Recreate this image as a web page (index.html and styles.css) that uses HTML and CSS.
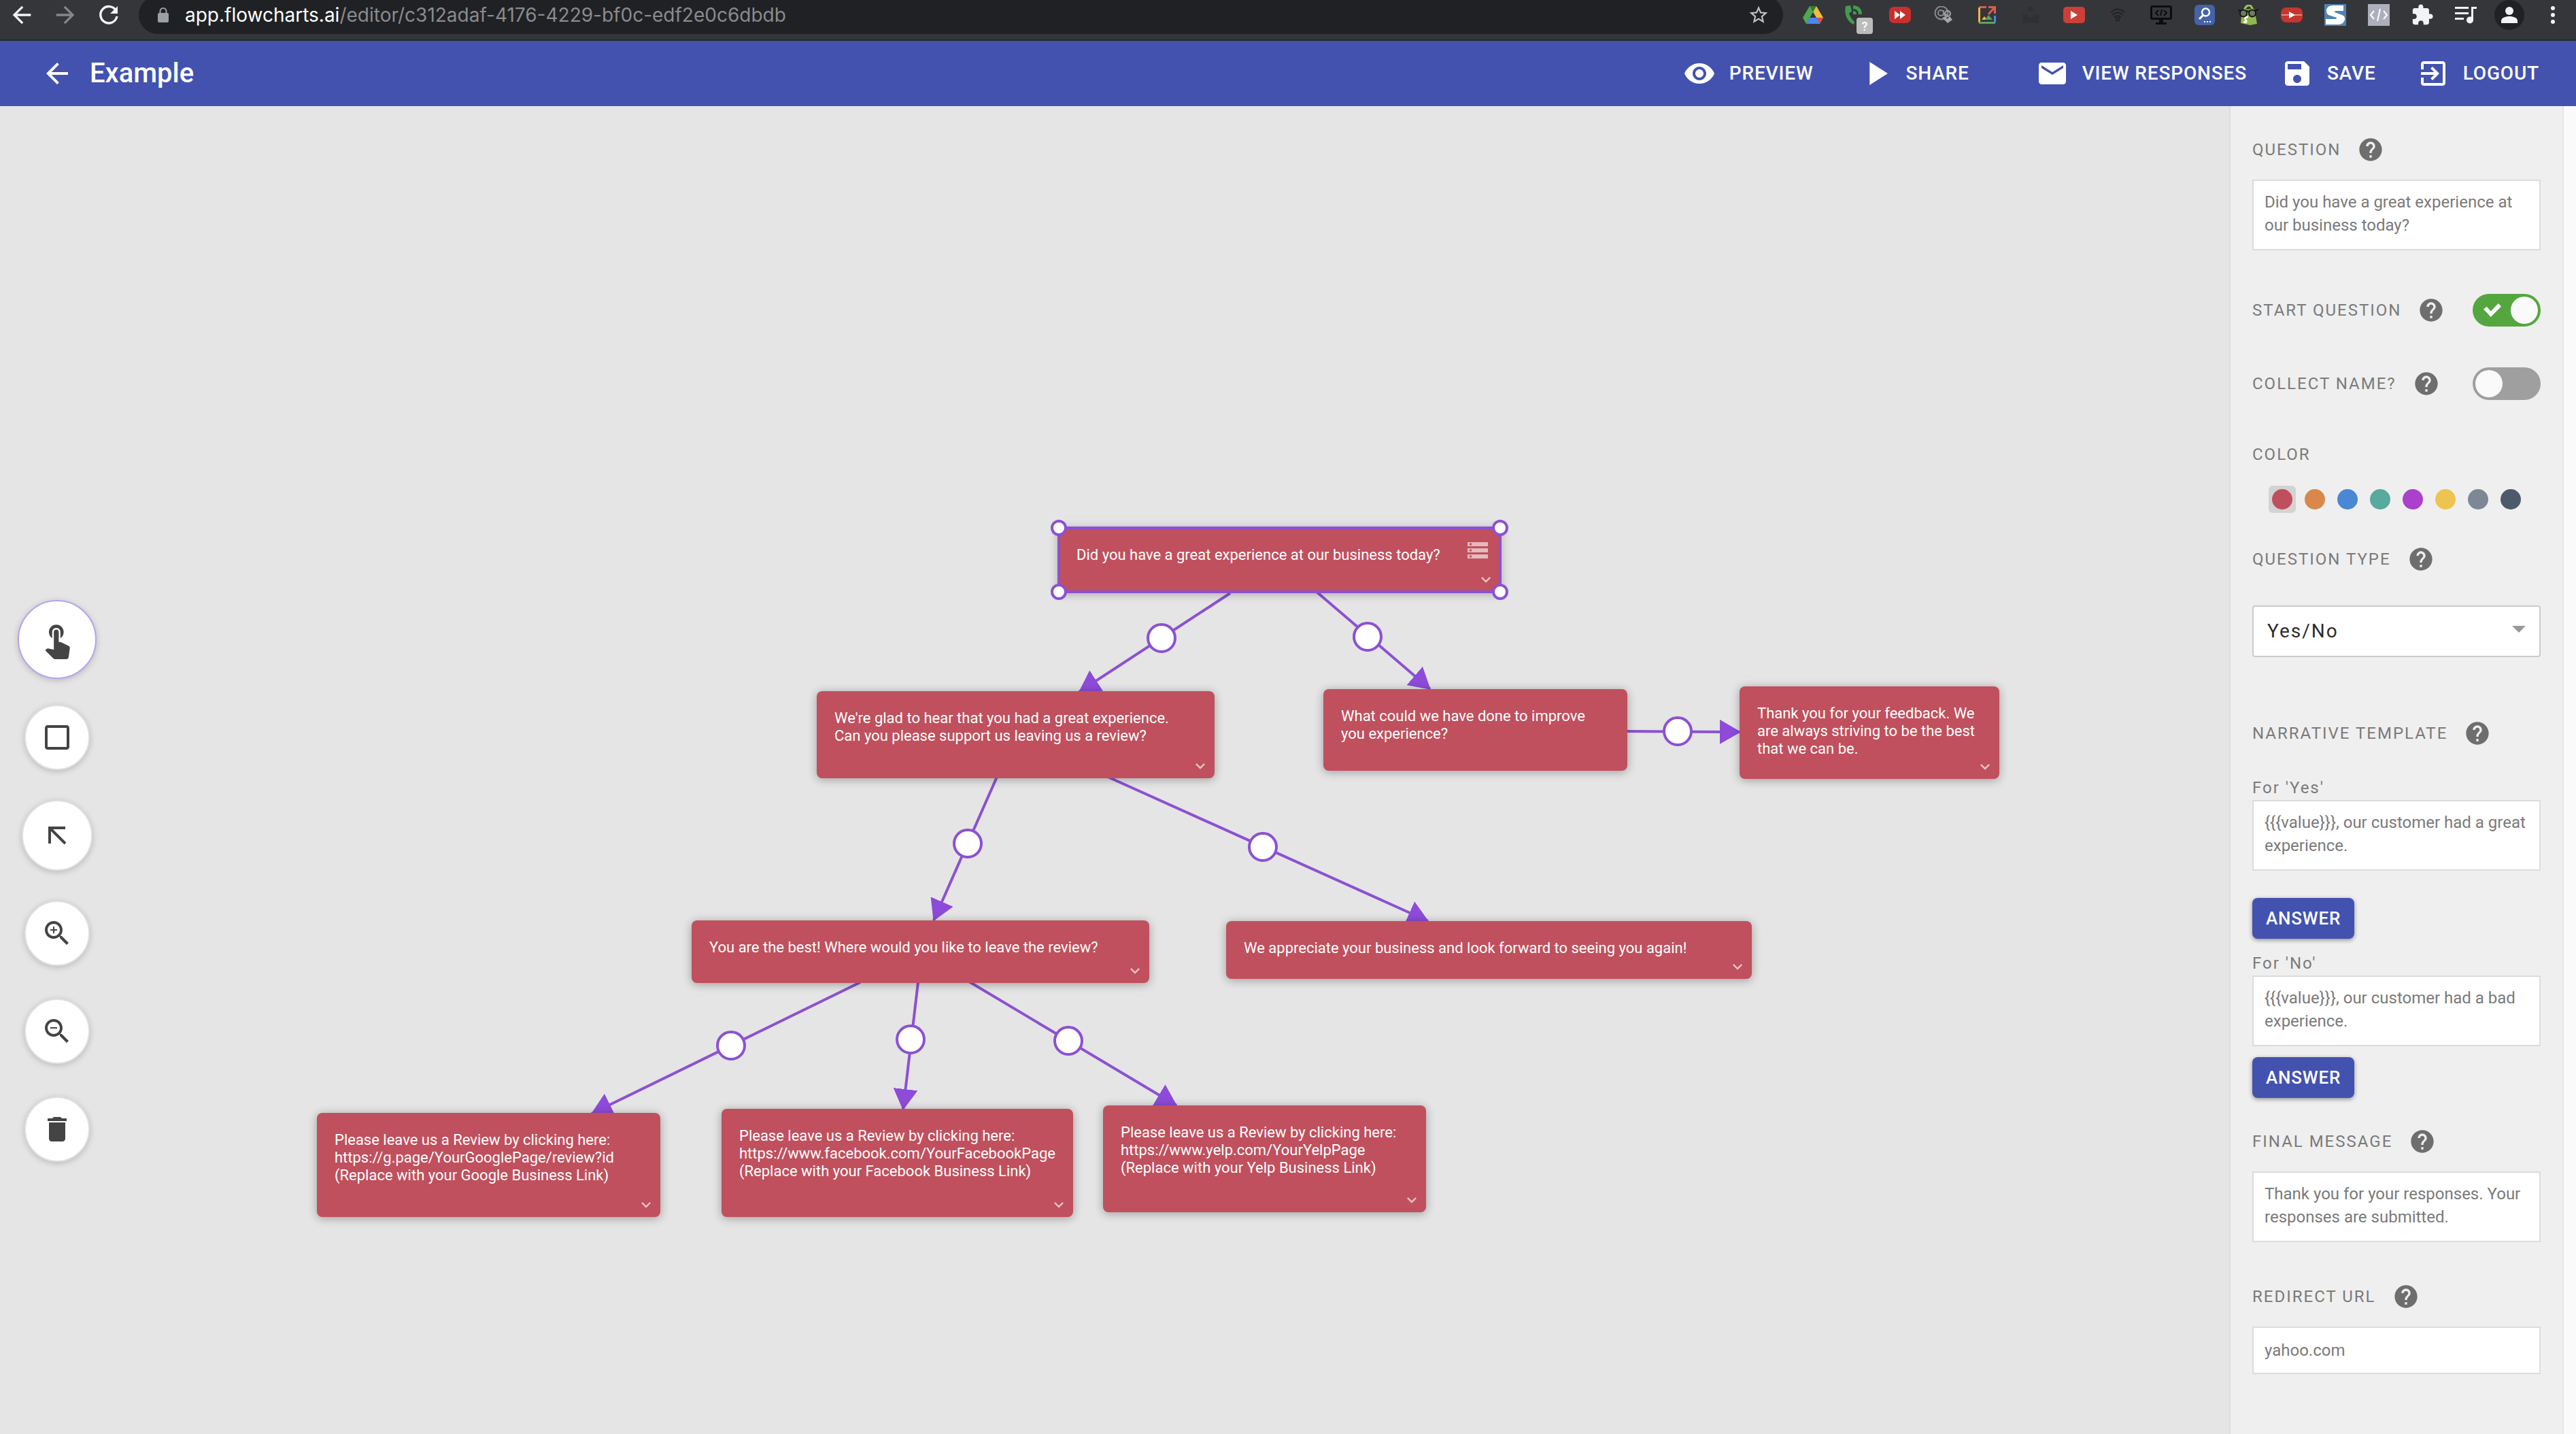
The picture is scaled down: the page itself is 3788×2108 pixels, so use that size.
FILE: index.html
```html
<!DOCTYPE html>
<html lang="en">
<head>
<meta charset="utf-8">
<meta name="viewport" content="width=device-width, initial-scale=1">
<title>Example – Flowchart editor</title>
<link rel="stylesheet" href="styles.css">
</head>
<body>
<svg class="defs" aria-hidden="true">
  <symbol id="help" viewBox="0 0 24 24"><path d="M12 2C6.48 2 2 6.48 2 12s4.48 10 10 10 10-4.48 10-10S17.52 2 12 2zm1 17h-2v-2h2v2zm2.07-7.75l-.9.92C13.45 12.9 13 13.5 13 15h-2v-.5c0-1.1.45-2.1 1.17-2.83l1.24-1.26c.37-.36.59-.86.59-1.41 0-1.1-.9-2-2-2s-2 .9-2 2H8c0-2.21 1.79-4 4-4s4 1.79 4 4c0 .88-.36 1.68-.93 2.25z"/></symbol>
  <symbol id="chevron" viewBox="0 0 24 24"><path d="M16.59 8.59L12 13.17 7.41 8.59 6 10l6 6 6-6z"/></symbol>
  <symbol id="back" viewBox="0 0 24 24"><path d="M20 11H7.83l5.59-5.59L12 4l-8 8 8 8 1.41-1.41L7.83 13H20v-2z"/></symbol>
</svg>

<div class="browser">
  <div class="browser-nav">
    <button class="nav-btn" aria-label="Back"><svg width="40" height="40"><use href="#back"/></svg></button>
    <button class="nav-btn nav-btn--off nav-btn--flip" aria-label="Forward"><svg width="40" height="40"><use href="#back"/></svg></button>
    <button class="nav-btn" aria-label="Reload"><svg width="40" height="40" viewBox="0 0 40 40"><path d="M30.5 13.5A12.2 12.2 0 1 0 32 22" fill="none" stroke="currentColor" stroke-width="3.4"/><path d="M33 7v11H22z"/></svg></button>
  </div>
  <div class="omnibox">
    <svg class="lock" width="16" height="22" viewBox="0 0 16 22"><path d="M3.5 9V5.500a4.500 4.500 0 0 1 9 0V9" fill="none" stroke="currentColor" stroke-width="2"/><rect y="8" width="16" height="14" rx="2"/></svg>
    <span class="url"><b>app.flowcharts.ai</b>/editor/c312adaf-4176-4229-bf0c-edf2e0c6dbdb</span>
    <button class="star" aria-label="Bookmark"><svg width="32" height="32" viewBox="0 0 24 24"><path d="M22 9.24l-7.190-.62L12 2 9.190 8.630 2 9.240l5.460 4.730L5.820 21 12 17.270 18.180 21l-1.630-7.030L22 9.240zM12 15.400l-3.760 2.270 1-4.280-3.320-2.880 4.380-.38L12 6.100l1.710 4.040 4.380.38-3.320 2.880 1 4.280L12 15.400z"/></svg></button>
  </div>
  <div class="extensions">
    <button class="ext" aria-label="Drive"><svg width="32" height="28" viewBox="0 0 32 28"><path d="M11 1h10l10 17H21z" fill="#f2bb42"/><path d="M11 1h10l-5 9z" fill="#2f7d32"/><path d="M11 1l5 9L6 27 1 18z" fill="#4fa94f"/><path d="M6 27l5-9h20l-5 9z" fill="#4b87ee"/><path d="M31 18l-5 9-5-9z" fill="#d9503f"/></svg></button>
    <button class="ext" aria-label="Calls"><svg class="tall" width="46" height="44" viewBox="0 0 46 44"><path d="M7 9l7-1 2 8-4 4c2 5 4 8 8 12l-1 4C11 33 4 22 7 9zM18 8c8 0 13 5 13 13h-5c0-5-3-8-8-8z" fill="#439c4c"/><path d="M18 16c3 0 5 2 5 5h-5z" fill="#439c4c"/><rect x="23" y="26" width="24" height="24" rx="4" fill="#bcbcbc"/><text x="35" y="45" text-anchor="middle" class="badge-text">?</text></svg></button>
    <button class="ext" aria-label="Fast forward"><svg width="32" height="24" viewBox="0 0 32 24"><rect width="32" height="24" rx="7" fill="#c82f2d"/><path d="M8 6l8 6-8 6zM16 6l8 6-8 6z" fill="#fff"/></svg></button>
    <button class="ext" aria-label="Mail finder"><svg width="28" height="26" viewBox="0 0 28 26"><circle cx="11" cy="10" r="9.500" fill="none" stroke="#8a8b8d" stroke-width="2"/><circle cx="10" cy="10" r="4" fill="none" stroke="#8a8b8d" stroke-width="2"/><path d="M14 6v7q3 2 5-2" fill="none" stroke="#8a8b8d" stroke-width="2"/><circle cx="20" cy="11" r="4" fill="none" stroke="#a6a7a9" stroke-width="2"/><path d="M12 17l5-2 2 4 4-4 4 5-7 5z" fill="#a6a7a9"/></svg></button>
    <button class="ext" aria-label="Image opener"><svg width="26" height="26" viewBox="0 0 26 26"><g fill="none" stroke-width="3"><path d="M12 1.500H1.500" stroke="#d4604f"/><path d="M1.500 2v22" stroke="#e9b941"/><path d="M1 24.500h24" stroke="#57a55a"/><path d="M24.500 14v10" stroke="#4f86e4"/><path d="M15 12l9-10M15 1.500h9.500V11" stroke="#d4604f"/></g><path d="M5 20l4-5 4 5z" fill="#e9b941"/><path d="M10 20l5-7 6 7z" fill="#57a55a"/></svg></button>
    <button class="ext" aria-label="Extension"><svg width="24" height="24" viewBox="0 0 24 24"><path d="M0 11h8v4h8v-4h8v13H0zM8 0h8v7H8z" fill="#2f3033"/></svg></button>
    <button class="ext" aria-label="Video"><svg width="32" height="24" viewBox="0 0 32 24"><rect width="32" height="24" rx="5" fill="#cb4038"/><path d="M11 6l10 6-10 6z" fill="#fff"/></svg></button>
    <button class="ext" aria-label="Signal"><svg width="22" height="20" viewBox="0 0 22 20"><g fill="none" stroke="#222326" stroke-width="2"><path d="M1 6q10-9 20 0M3 10q8-7 16 0M6 13q5-4 10 0"/><circle cx="11" cy="16" r="2.500"/></g></svg></button>
    <button class="ext" aria-label="Web console"><svg width="32" height="28" viewBox="0 0 32 28"><rect x="1.500" y="1.500" width="29" height="18" rx="2" fill="none" stroke="#0c0c0d" stroke-width="3"/><path d="M13 20h6v5h5v3H8v-3h5z" fill="#0c0c0d"/><path d="M12 7l-4 4 4 4M20 7l4 4-4 4M17 6l-2 9" fill="none" stroke="#0c0c0d" stroke-width="2"/></svg></button>
    <button class="ext" aria-label="Search tool"><svg width="30" height="30" viewBox="0 0 30 30"><rect width="30" height="30" rx="6" fill="#4663a8"/><circle cx="16.500" cy="11" r="5.500" fill="none" stroke="#fff" stroke-width="2.500"/><path d="M13 15l-6 6" stroke="#fff" stroke-width="3"/><path d="M14 25h2M18 25h2M22 25h2" stroke="#fff" stroke-width="2"/></svg></button>
    <button class="ext" aria-label="Store inspector"><svg width="32" height="30" viewBox="0 0 32 30"><path d="M7 7l18-1 4 22-10 2-14-3z" fill="#8fb84e"/><path d="M10 8q3-8 8-7 4 1 4 7" fill="none" stroke="#9bc25a" stroke-width="3"/><path d="M1 8l5 1h8l2 1 2-1h7l6-2" fill="none" stroke="#141414" stroke-width="2"/><circle cx="9" cy="12.500" r="5" fill="#6f7b62" stroke="#141414" stroke-width="2"/><circle cx="22" cy="12.500" r="5" fill="#6f7b62" stroke="#141414" stroke-width="2"/><path d="M16 18q-6 0-4 4 3 3 0 4l-3-1" fill="none" stroke="#fff" stroke-width="2.500"/></svg></button>
    <button class="ext" aria-label="Player"><svg width="32" height="24" viewBox="0 0 32 24"><rect y="1" width="32" height="22" rx="8" fill="#c4362f"/><path d="M1 12h30" stroke="#e58b84" stroke-width="2"/><path d="M12 7l9 5-9 5z" fill="#fff"/></svg></button>
    <button class="ext" aria-label="Stylebot"><svg width="32" height="32" viewBox="0 0 32 32"><rect width="32" height="32" fill="#4f83b3"/><path d="M28 2v8H18q-4 0-3 2l11 4q5 2 4 7-2 7-9 7H2v-8h13q4 0 3-2L6 16q-4-3-3-8 2-6 9-6z" fill="#fff"/></svg></button>
    <button class="ext" aria-label="Code"><svg width="32" height="32" viewBox="0 0 32 32"><rect width="32" height="32" fill="#adafbd"/><path d="M9 10l-5 6 5 6M23 10l5 6-5 6M18 7l-4 18" fill="none" stroke="#fff" stroke-width="2"/></svg></button>
    <button class="ext" aria-label="Extensions"><svg width="34" height="34" viewBox="0 0 24 24"><path d="M20.500 11H19V7c0-1.100-.9-2-2-2h-4V3.500C13 2.120 11.880 1 10.500 1S8 2.120 8 3.500V5H4c-1.100 0-1.990.9-1.990 2v3.800H3.500c1.490 0 2.700 1.210 2.700 2.700s-1.210 2.700-2.700 2.700H2V20c0 1.100.9 2 2 2h3.800v-1.500c0-1.490 1.210-2.700 2.700-2.700 1.490 0 2.700 1.210 2.700 2.700V22H17c1.100 0 2-.9 2-2v-4h1.500c1.380 0 2.500-1.120 2.500-2.500S21.880 11 20.500 11z"/></svg></button>
    <button class="ext" aria-label="Media"><svg width="32" height="26" viewBox="0 0 32 26"><path d="M0 1h20v3H0zM0 9h20v3H0zM0 17h13v3H0z"/><path d="M24 1h8v3h-5v16h-3z"/><circle cx="22" cy="20.500" r="5"/></svg></button>
    <button class="ext" aria-label="Profile"><svg width="44" height="44" viewBox="0 0 44 44"><circle cx="22" cy="22" r="22" fill="#202124"/><circle cx="22" cy="16" r="6"/><path d="M10 34v-3c0-5 6-7 12-7s12 2 12 7v3z"/></svg></button>
    <button class="ext" aria-label="Menu"><svg width="6" height="26" viewBox="0 0 6 26"><circle cx="3" cy="3" r="3"/><circle cx="3" cy="13" r="3"/><circle cx="3" cy="23" r="3"/></svg></button>
  </div>
</div>

<header class="appbar">
  <a class="appbar-back" href="#" aria-label="Back to list"><svg width="48" height="48"><use href="#back"/></svg></a>
  <h1 class="appbar-title">Example</h1>
  <nav class="actions">
    <button class="action"><svg width="48" height="48" viewBox="0 0 24 24"><path d="M12 4.500C7 4.500 2.730 7.610 1 12c1.730 4.390 6 7.500 11 7.500s9.270-3.110 11-7.500c-1.730-4.390-6-7.500-11-7.500zM12 17c-2.760 0-5-2.240-5-5s2.240-5 5-5 5 2.240 5 5-2.240 5-5 5zm0-8c-1.660 0-3 1.340-3 3s1.340 3 3 3 3-1.340 3-3-1.340-3-3-3z"/></svg>PREVIEW</button>
    <button class="action action--share"><svg width="58" height="58" viewBox="0 0 24 24"><path d="M8 5v14l11-7z"/></svg>SHARE</button>
    <button class="action action--responses"><svg width="48" height="48" viewBox="0 0 24 24"><path d="M20 4H4c-1.100 0-1.990.9-1.990 2L2 18c0 1.100.9 2 2 2h16c1.100 0 2-.9 2-2V6c0-1.100-.9-2-2-2zm0 4l-8 5-8-5V6l8 5 8-5v2z"/></svg>VIEW RESPONSES</button>
    <button class="action action--save"><svg width="48" height="48" viewBox="0 0 24 24"><path d="M17 3H5c-1.110 0-2 .9-2 2v14c0 1.100.89 2 2 2h14c1.100 0 2-.9 2-2V7l-4-4zm-5 16c-1.660 0-3-1.340-3-3s1.340-3 3-3 3 1.340 3 3-1.340 3-3 3zm3-10H5V5h10v4z"/></svg>SAVE</button>
    <button class="action"><svg width="48" height="48" viewBox="0 0 24 24"><path d="M10.090 15.590L11.500 17l5-5-5-5-1.410 1.410L12.670 11H3v2h9.670l-2.580 2.590zM19 3H5c-1.110 0-2 .9-2 2v4h2V5h14v14H5v-4H3v4c0 1.100.89 2 2 2h14c1.100 0 2-.9 2-2V5c0-1.100-.9-2-2-2z"/></svg>LOGOUT</button>
  </nav>
</header>

<div class="workspace">
  <main class="canvas">
    <svg class="edges" aria-hidden="true">
      <defs><marker id="arrow" markerUnits="userSpaceOnUse" markerWidth="32" markerHeight="36" refX="30" refY="18" orient="auto"><path d="M0 0L31 18L0 36z" fill="#8e4bd9"/></marker></defs>
      <g class="edge-lines">
        <path d="M1809 716L1587 861"/>
        <path d="M1936 714L2103 857"/>
        <path d="M2390 919L2559 920"/>
        <path d="M1466 986L1373 1197"/>
        <path d="M1629 986L2100 1198"/>
        <path d="M1265 1288L870 1481"/>
        <path d="M1350 1288L1328 1475"/>
        <path d="M1425 1287L1730 1469"/>
      </g>
      <g class="edge-dots">
        <circle cx="1708" cy="782" r="20"/>
        <circle cx="2011" cy="780" r="20"/>
        <circle cx="2467" cy="919" r="20"/>
        <circle cx="1423" cy="1084" r="20"/>
        <circle cx="1857" cy="1089" r="20"/>
        <circle cx="1075" cy="1381" r="20"/>
        <circle cx="1339" cy="1372" r="20"/>
        <circle cx="1571" cy="1374" r="20"/>
      </g>
    </svg>

    <article class="node node--start">Did you have a great experience at our business today?
      <svg class="node-list" width="36" height="36" viewBox="0 0 24 24"><path d="M2 20h20v-4H2v4zm2-3h2v2H4v-2zM2 4v4h20V4H2zm4 3H4V5h2v2zm-4 7h20v-4H2v4zm2-3h2v2H4v-2z"/></svg>
      <svg class="node-more"><use href="#chevron"/></svg>
      <i class="handle handle--tl"></i><i class="handle handle--tr"></i><i class="handle handle--bl"></i><i class="handle handle--br"></i>
    </article>
    <article class="node node--glad">We're glad to hear that you had a great experience.<br>Can you please support us leaving us a review?<svg class="node-more"><use href="#chevron"/></svg></article>
    <article class="node node--improve">What could we have done to improve<br>you experience?</article>
    <article class="node node--thanks">Thank you for your feedback. We<br>are always striving to be the best<br>that we can be.<svg class="node-more"><use href="#chevron"/></svg></article>
    <article class="node node--best">You are the best! Where would you like to leave the review?<svg class="node-more"><use href="#chevron"/></svg></article>
    <article class="node node--again">We appreciate your business and look forward to seeing you again!<svg class="node-more"><use href="#chevron"/></svg></article>
    <article class="node node--google">Please leave us a Review by clicking here:<br>https://g.page/YourGooglePage/review?id<br>(Replace with your Google Business Link)<svg class="node-more"><use href="#chevron"/></svg></article>
    <article class="node node--facebook">Please leave us a Review by clicking here:<br>https://www.facebook.com/YourFacebookPage<br>(Replace with your Facebook Business Link)<svg class="node-more"><use href="#chevron"/></svg></article>
    <article class="node node--yelp">Please leave us a Review by clicking here:<br>https://www.yelp.com/YourYelpPage<br>(Replace with your Yelp Business Link)<svg class="node-more"><use href="#chevron"/></svg></article>

    <div class="tools">
      <div class="tool-slot"><button class="tool tool--active" aria-label="Select"><svg width="58" height="58" viewBox="0 0 24 24"><path d="M9 11.240V7.500C9 6.120 10.120 5 11.500 5S14 6.120 14 7.500v3.740c1.210-.81 2-2.180 2-3.740C16 5.010 13.990 3 11.500 3S7 5.010 7 7.500c0 1.560.79 2.930 2 3.740zm9.840 4.630l-4.540-2.260c-.17-.07-.35-.11-.54-.11H13v-6c0-.83-.67-1.500-1.500-1.500S10 6.670 10 7.500v10.740l-3.430-.72c-.08-.01-.15-.03-.24-.03-.31 0-.59.13-.79.33l-.79.8 4.940 4.940c.27.27.65.44 1.060.44h6.790c.75 0 1.330-.55 1.440-1.280l.75-5.270c.01-.07.02-.14.02-.2 0-.62-.38-1.160-.91-1.380z"/></svg></button></div>
      <div class="tool-slot"><button class="tool" aria-label="Add box"><svg width="48" height="48" viewBox="0 0 24 24"><path d="M19 3H5c-1.100 0-2 .9-2 2v14c0 1.100.9 2 2 2h14c1.100 0 2-.9 2-2V5c0-1.100-.9-2-2-2zm0 16H5V5h14v14z"/></svg></button></div>
      <div class="tool-slot"><button class="tool tool--arrow" aria-label="Add arrow"><svg width="28" height="28" viewBox="0 0 28 28"><path d="M3 26V3H26M3 3L26 26" fill="none" stroke="currentColor" stroke-width="4"/></svg></button></div>
      <div class="tool-slot"><button class="tool" aria-label="Zoom in"><svg width="48" height="48" viewBox="0 0 24 24"><path d="M15.500 14h-.79l-.28-.27C15.410 12.590 16 11.110 16 9.500 16 5.910 13.090 3 9.500 3S3 5.910 3 9.500 5.910 16 9.500 16c1.610 0 3.090-.59 4.230-1.570l.27.28v.79l5 4.990L20.490 19l-4.990-5zm-6 0C7.010 14 5 11.990 5 9.500S7.010 5 9.500 5 14 7.010 14 9.500 11.990 14 9.500 14zm2.500-4h-2v2H9v-2H7V9h2V7h1v2h2v1z"/></svg></button></div>
      <div class="tool-slot"><button class="tool" aria-label="Zoom out"><svg width="48" height="48" viewBox="0 0 24 24"><path d="M15.500 14h-.79l-.28-.27C15.410 12.590 16 11.110 16 9.500 16 5.910 13.090 3 9.500 3S3 5.910 3 9.500 5.910 16 9.500 16c1.610 0 3.090-.59 4.230-1.570l.27.28v.79l5 4.990L20.490 19l-4.990-5zm-6 0C7.010 14 5 11.990 5 9.500S7.010 5 9.500 5 14 7.010 14 9.500 11.990 14 9.500 14zM7 9h5v1H7z"/></svg></button></div>
      <div class="tool-slot"><button class="tool" aria-label="Delete"><svg width="48" height="48" viewBox="0 0 24 24"><path d="M6 19c0 1.100.9 2 2 2h8c1.100 0 2-.9 2-2V7H6v12zM19 4h-3.500l-1-1h-5l-1 1H5v2h14V4z"/></svg></button></div>
    </div>
  </main>

  <aside class="panel">
    <section class="field">
      <div class="row"><label class="label" for="question">QUESTION</label><button class="help" aria-label="Help: question"><svg><use href="#help"/></svg></button></div>
      <textarea class="box" id="question">Did you have a great experience at our business today?</textarea>
    </section>
    <section class="toggles">
      <div class="row row--toggle"><label class="label" for="start">START QUESTION</label><button class="help" aria-label="Help: start question"><svg><use href="#help"/></svg></button><input class="switch" type="checkbox" id="start" checked></div>
      <div class="row row--toggle"><label class="label" for="collect">COLLECT NAME?</label><button class="help" aria-label="Help: collect name"><svg><use href="#help"/></svg></button><input class="switch" type="checkbox" id="collect"></div>
    </section>
    <section class="colors">
      <span class="label">COLOR</span>
      <div class="palette">
        <button class="swatch swatch--on swatch--red" aria-label="Red"></button>
        <button class="swatch swatch--orange" aria-label="Orange"></button>
        <button class="swatch swatch--blue" aria-label="Blue"></button>
        <button class="swatch swatch--teal" aria-label="Teal"></button>
        <button class="swatch swatch--purple" aria-label="Purple"></button>
        <button class="swatch swatch--yellow" aria-label="Yellow"></button>
        <button class="swatch swatch--gray" aria-label="Gray"></button>
        <button class="swatch swatch--slate" aria-label="Slate"></button>
      </div>
    </section>
    <section class="type">
      <div class="row"><label class="label" for="type">QUESTION TYPE</label><button class="help" aria-label="Help: question type"><svg><use href="#help"/></svg></button></div>
      <div class="select-wrap"><select class="select" id="type"><option>Yes/No</option></select></div>
    </section>
    <section class="narrative">
      <div class="row"><span class="label">NARRATIVE TEMPLATE</span><button class="help" aria-label="Help: narrative template"><svg><use href="#help"/></svg></button></div>
      <div class="template">
        <label class="label" for="yes">For 'Yes'</label>
        <textarea class="box" id="yes">{{{value}}}, our customer had a great experience.</textarea>
        <button class="answer answer--yes">ANSWER</button>
      </div>
      <div class="template">
        <label class="label" for="no">For 'No'</label>
        <textarea class="box" id="no">{{{value}}}, our customer had a bad experience.</textarea>
        <button class="answer">ANSWER</button>
      </div>
    </section>
    <section class="field">
      <div class="row"><label class="label" for="final">FINAL MESSAGE</label><button class="help" aria-label="Help: final message"><svg><use href="#help"/></svg></button></div>
      <textarea class="box" id="final">Thank you for your responses. Your responses are submitted.</textarea>
    </section>
    <section class="field">
      <div class="row"><label class="label" for="redirect">REDIRECT URL</label><button class="help" aria-label="Help: redirect url"><svg><use href="#help"/></svg></button></div>
      <input class="box box--line" type="text" id="redirect" value="yahoo.com">
    </section>
  </aside>
</div>
</body>
</html>
```
FILE: styles.css
```css
* { box-sizing: border-box; }

body {
  margin: 0;
  min-height: 100vh;
  display: flex;
  flex-direction: column;
  overflow-x: hidden;
  background: #fafafa;
  font-family: Roboto, "Liberation Sans", sans-serif;
}

button {
  margin: 0;
  padding: 0;
  border: 0;
  background: none;
  color: inherit;
  font: inherit;
  display: flex;
  align-items: center;
  justify-content: center;
}

svg { display: block; fill: currentColor; flex: none; }
.defs { position: absolute; width: 0; height: 0; }

/* Browser bar */
.browser {
  height: 60px;
  display: flex;
  align-items: flex-start;
  padding-right: 2px;
  overflow: hidden;
  background: #35363a;
  border-bottom: 2px solid #27282b;
  color: #f1f3f4;
}
.browser-nav { display: flex; width: 204px; height: 44px; }
.nav-btn { width: 64px; height: 44px; }
.nav-btn--off { color: #85868a; }
.nav-btn--flip svg { transform: scaleX(-1); }
.omnibox {
  flex: 1;
  height: 56px;
  margin: -6px 12px 0 0;
  padding: 0 20px 0 28px;
  display: flex;
  align-items: center;
  gap: 24px;
  border-radius: 28px;
  background: #202124;
  color: #9aa0a6;
}
.url {
  flex: 1;
  font: 28px/32px Inter, Roboto, sans-serif;
  color: #8a8b8e;
}
.url b { font-weight: 400; color: #fff; }
.star { color: #c0c2c5; }
.extensions { display: flex; }
.ext { width: 64px; height: 44px; }
.ext .tall { overflow: visible; }
.badge-text { font: 500 18px Roboto, sans-serif; fill: #fff; }

/* App bar */
.appbar {
  height: 96px;
  display: flex;
  align-items: center;
  padding: 0 54px 0 60px;
  background: #4352af;
  color: #fff;
}
.appbar-back { color: inherit; }
.appbar-title {
  margin: 0 auto 0 24px;
  font-size: 40px;
  line-height: 48px;
  font-weight: 500;
}
.actions { display: flex; }
.action {
  gap: 20px;
  margin-left: 60px;
  font-size: 28px;
  line-height: 48px;
  font-weight: 500;
  letter-spacing: 0.03em;
}
.action--share { gap: 14px; margin-left: 64px; }
.action--responses { margin-left: 98px; }
.action--save { margin-left: 50px; }

/* Workspace */
.workspace { flex: 1; display: flex; }
.canvas {
  flex: 1;
  position: relative;
  overflow: hidden;
  background: #e5e5e5;
}
.edges { position: absolute; inset: 0; width: 100%; height: 100%; }
.edge-lines { fill: none; stroke: #8b51d2; stroke-width: 4; }
.edge-lines path { marker-end: url(#arrow); }
.edge-dots { fill: #fff; stroke: #8b51d2; stroke-width: 4; }

.node {
  position: absolute;
  padding: 27px 26px;
  border-radius: 8px;
  background: #c0505d;
  box-shadow: 0 2px 14px rgba(0, 0, 0, 0.32);
  color: #fff;
  font-size: 22px;
  line-height: 26px;
  white-space: nowrap;
}
.node-more {
  position: absolute;
  right: 7px;
  bottom: 4px;
  width: 28px;
  height: 28px;
  opacity: 0.65;
}
.node-list { position: absolute; right: 15px; top: 15px; opacity: 0.6; }
.node--start {
  left: 1557px; top: 620px; width: 649px; height: 94px;
  outline: 4px solid #8b51d2;
  outline-offset: -2px;
  border-radius: 0;
}
.node--glad { left: 1201px; top: 860px; width: 585px; height: 128px; }
.node--improve { left: 1946px; top: 857px; width: 447px; height: 120px; }
.node--thanks { left: 2558px; top: 853px; width: 382px; height: 136px; }
.node--best { left: 1017px; top: 1197px; width: 673px; height: 92px; }
.node--again { left: 1803px; top: 1198px; width: 773px; height: 85px; }
.node--google { left: 466px; top: 1480px; width: 505px; height: 153px; }
.node--facebook { left: 1061px; top: 1474px; width: 517px; height: 159px; }
.node--yelp { left: 1622px; top: 1469px; width: 475px; height: 157px; }

.handle {
  position: absolute;
  width: 24px;
  height: 24px;
  border: 4px solid #8b51d2;
  border-radius: 50%;
  background: #fff;
}
.handle--tl { left: -12px; top: -12px; }
.handle--tr { right: -12px; top: -12px; }
.handle--bl { left: -12px; bottom: -12px; }
.handle--br { right: -12px; bottom: -12px; }

.tools {
  position: absolute;
  left: 24px;
  top: 712px;
  width: 120px;
}
.tool-slot { height: 144px; display: grid; place-items: center; }
.tool {
  width: 96px;
  height: 96px;
  border: 2px solid #e0e0e0;
  border-radius: 50%;
  background: #fff;
  box-shadow: 0 2px 10px rgba(0, 0, 0, 0.2);
  color: #444;
}
.tool--active { width: 116px; height: 116px; border-color: #b9a3f0; }
.tool--arrow { width: 104px; height: 104px; }

/* Settings panel */
.panel {
  width: 492px;
  margin-right: 18px;
  padding: 44px 32px 88px;
  border: solid #dcdcdc;
  border-width: 0 2px;
  border-right-color: #e6e6e6;
  background: #efefef;
  color: #7a7a7a;
  display: flex;
  flex-direction: column;
}
.field { margin-bottom: 60px; }
.field:first-child { margin-bottom: 64px; }
.field:last-child { margin-bottom: 0; }
.field .row { margin-bottom: 24px; }
.row { display: flex; align-items: center; height: 40px; gap: 24px; }
.row--toggle { height: 48px; }
.label {
  display: block;
  font-size: 24px;
  line-height: 28px;
  letter-spacing: 2px;
}
.help { color: #6e6e6e; }
.help svg { width: 40px; height: 40px; }
.toggles { display: grid; gap: 60px; margin-bottom: 66px; }

.box {
  display: block;
  width: 100%;
  height: 104px;
  margin: 0;
  padding: 14px 12px 14px 16px;
  border: 2px solid #dcdcdc;
  border-radius: 0;
  background: #fff;
  color: #7a7a7a;
  font: 24px/34px Roboto, "Liberation Sans", sans-serif;
  resize: none;
  overflow: hidden;
}
.box--line { height: 70px; }

.switch {
  appearance: none;
  position: relative;
  width: 100px;
  height: 48px;
  margin: 0 0 0 auto;
  border-radius: 24px;
  background: #9f9f9f;
}
.switch::before {
  content: "";
  position: absolute;
  left: 4px;
  top: 4px;
  width: 40px;
  height: 40px;
  border-radius: 50%;
  background: #fafafa;
}
.switch:checked { background: #54a63f; }
.switch:checked::before { left: 56px; }
.switch:checked::after {
  content: "";
  position: absolute;
  left: 16px;
  top: 14px;
  width: 26px;
  height: 20px;
  background: #fff;
  clip-path: polygon(0 43%, 18% 24%, 41% 57%, 84% 0, 100% 22%, 41% 100%);
}

.colors { margin-bottom: 48px; }
.palette { display: flex; gap: 8px; margin-top: 32px; padding-left: 24px; }
.swatch { width: 40px; height: 40px; border-radius: 6px; }
.swatch::before {
  content: "";
  width: 30px;
  height: 30px;
  border-radius: 50%;
  background: currentColor;
}
.swatch--on { background: #d3d3d3; }
.swatch--red { color: #c04f5d; }
.swatch--orange { color: #d9884b; }
.swatch--blue { color: #4a88d4; }
.swatch--teal { color: #57aa9d; }
.swatch--purple { color: #ab40cb; }
.swatch--yellow { color: #edc44f; }
.swatch--gray { color: #7d8896; }
.swatch--slate { color: #4d5a69; }

.type { margin-bottom: 92px; }
.select-wrap { position: relative; margin-top: 48px; }
.select-wrap::after {
  content: "";
  position: absolute;
  right: 22px;
  top: 30px;
  border: solid transparent;
  border-width: 10px 10px 0;
  border-top-color: #999;
  pointer-events: none;
}
.select {
  appearance: none;
  display: block;
  width: 100%;
  height: 76px;
  padding: 0 20px;
  border: 2px solid #cbcbcb;
  border-radius: 4px;
  background: #fff;
  color: #2c2c2c;
  font: 28px/34px Roboto, "Liberation Sans", sans-serif;
  letter-spacing: 2px;
}

.narrative { margin-bottom: 44px; }
.narrative .row { margin-bottom: 46px; }
.template + .template { margin-top: 22px; }
.template .box { margin-top: 4px; }
.answer {
  width: 150px;
  height: 60px;
  margin-top: 16px;
  border-radius: 8px;
  background: #4352af;
  box-shadow: 0 2px 6px rgba(0, 0, 0, 0.4);
  color: #fff;
  font-size: 26px;
  line-height: 32px;
  font-weight: 500;
  letter-spacing: 0.03em;
}
.answer--yes { margin-top: 40px; }
```
